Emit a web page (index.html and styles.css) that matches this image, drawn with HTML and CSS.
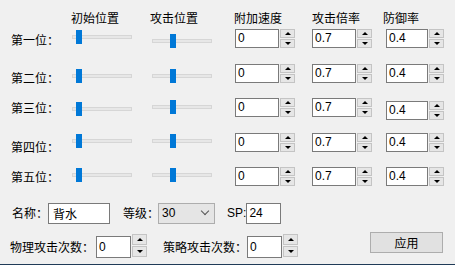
FILE: index.html
```html
<!DOCTYPE html>
<html lang="zh-CN">
<head>
    <meta charset="UTF-8">
    <title>阵型设置</title>
    <link rel="stylesheet" href="styles.css">
</head>
<body>

<div class="dialog">
    <div class="grid">
        <div class="head"></div>
        <div class="head h-start">初始位置</div>
        <div class="head h-attack">攻击位置</div>
        <div class="head h-speed">附加速度</div>
        <div class="head">攻击倍率</div>
        <div class="head h-def">防御率</div>

        <div class="row r1">
            <div class="name">第一位：</div>
            <div class="slider"><div class="track"></div><span class="thumb" style="left:4px"></span></div>
            <div class="slider s-b"><div class="track"></div><span class="thumb" style="left:18px"></span></div>
            <div class="spin"><div class="box">0</div><div class="arrows"><span class="up"></span><span class="down"></span></div></div>
            <div class="spin"><div class="box">0.7</div><div class="arrows"><span class="up"></span><span class="down"></span></div></div>
            <div class="spin"><div class="box">0.4</div><div class="arrows"><span class="up"></span><span class="down"></span></div></div>
        </div>

        <div class="row r2">
            <div class="name">第二位：</div>
            <div class="slider"><div class="track"></div><span class="thumb" style="left:4px"></span></div>
            <div class="slider s-b"><div class="track"></div><span class="thumb" style="left:18px"></span></div>
            <div class="spin"><div class="box">0</div><div class="arrows"><span class="up"></span><span class="down"></span></div></div>
            <div class="spin"><div class="box">0.7</div><div class="arrows"><span class="up"></span><span class="down"></span></div></div>
            <div class="spin"><div class="box">0.4</div><div class="arrows"><span class="up"></span><span class="down"></span></div></div>
        </div>

        <div class="row r3">
            <div class="name">第三位：</div>
            <div class="slider"><div class="track"></div><span class="thumb" style="left:4px"></span></div>
            <div class="slider s-b"><div class="track"></div><span class="thumb" style="left:18px"></span></div>
            <div class="spin"><div class="box">0</div><div class="arrows"><span class="up"></span><span class="down"></span></div></div>
            <div class="spin"><div class="box">0.7</div><div class="arrows"><span class="up"></span><span class="down"></span></div></div>
            <div class="spin s-low"><div class="box">0.4</div><div class="arrows"><span class="up"></span><span class="down"></span></div></div>
        </div>

        <div class="row r4">
            <div class="name">第四位：</div>
            <div class="slider"><div class="track"></div><span class="thumb" style="left:4px"></span></div>
            <div class="slider s-b"><div class="track"></div><span class="thumb" style="left:18px"></span></div>
            <div class="spin"><div class="box">0</div><div class="arrows"><span class="up"></span><span class="down"></span></div></div>
            <div class="spin"><div class="box">0.7</div><div class="arrows"><span class="up"></span><span class="down"></span></div></div>
            <div class="spin"><div class="box">0.4</div><div class="arrows"><span class="up"></span><span class="down"></span></div></div>
        </div>

        <div class="row r5">
            <div class="name">第五位：</div>
            <div class="slider"><div class="track"></div><span class="thumb" style="left:4px"></span></div>
            <div class="slider s-b"><div class="track"></div><span class="thumb" style="left:18px"></span></div>
            <div class="spin"><div class="box">0</div><div class="arrows"><span class="up"></span><span class="down"></span></div></div>
            <div class="spin"><div class="box">0.7</div><div class="arrows"><span class="up"></span><span class="down"></span></div></div>
            <div class="spin"><div class="box">0.4</div><div class="arrows"><span class="up"></span><span class="down"></span></div></div>
        </div>
    </div>

    <div class="info">
        <span class="lbl">名称：</span>
        <div class="box name-box">背水</div>
        <span class="lbl level">等级：</span>
        <div class="combo"><span>30</span><span class="chev"></span></div>
        <span class="lbl sp">SP:</span>
        <div class="box sp-box">24</div>
    </div>

    <div class="counts">
        <span class="lbl">物理攻击次数：</span>
        <div class="spin small"><div class="box">0</div><div class="arrows"><span class="up"></span><span class="down"></span></div></div>
        <span class="lbl tactic">策略攻击次数：</span>
        <div class="spin small"><div class="box">0</div><div class="arrows"><span class="up"></span><span class="down"></span></div></div>
        <button class="apply">应用</button>
    </div>
</div>

</body>
</html>
```

FILE: styles.css
```css
body {
    margin: 0;
    background-color: #f0f0f0;
    font-family: "Noto Sans CJK SC", "Liberation Sans", sans-serif;
    font-size: 12px;
    color: #000;
}
.dialog {
    width: 455px;
    height: 264px;
    border-bottom: 1px solid #1f3b57;
    overflow: hidden;
}
.grid {
    display: grid;
    grid-template-columns: 62px 80px 83px 77px 74px 58px;
    grid-template-rows: 19px repeat(5, 34.5px);
    padding: 10px 0 0 10px;
}
.row {
    display: contents;
}
.head {
    line-height: 14px;
    margin-top: 1px;
}
.h-start {
    margin-left: -1px;
}
.h-attack {
    margin-left: -2px;
}
.h-speed {
    margin-left: -1px;
}
.h-def {
    margin-left: -3px;
}
.name {
    line-height: 14px;
    margin-top: 4px;
    margin-left: 1px;
}
.r2 .name, .r4 .name {
    margin-top: 7px;
}
.r3 .name, .r5 .name {
    margin-top: 3px;
}

/* trackbars */
.slider {
    position: relative;
    width: 60px;
    height: 14px;
    margin-top: 1px;
    align-self: start;
}
.slider.s-b {
    margin-top: 5px;
}
.r2 .slider {
    margin-top: 5px;
}
.r3 .slider {
    margin-top: 4px;
}
.r3 .slider.s-b {
    margin-top: 2px;
}
.r4 .slider, .r5 .slider {
    margin-top: 1px;
}
.track {
    margin-top: 5px;
    height: 2px;
    background-color: #e7e7e7;
    border: 1px solid #d6d6d6;
}
.thumb {
    position: absolute;
    top: 0;
    width: 6px;
    height: 14px;
    background-color: #0078d7;
}

/* numeric up/down */
.spin {
    display: flex;
    align-items: flex-start;
    align-self: start;
}
.spin.s-low {
    margin-top: 3px;
}
.box {
    box-sizing: border-box;
    width: 44px;
    height: 19px;
    border: 1px solid #7a7a7a;
    background-color: #fff;
    padding-left: 2px;
    font-family: "Liberation Sans", "Noto Sans CJK SC", sans-serif;
    font-size: 12px;
    line-height: 17px;
}
.arrows {
    display: flex;
    flex-direction: column;
    gap: 1px;
    margin-left: 1px;
}
.arrows span {
    box-sizing: border-box;
    width: 15px;
    height: 9px;
    border: 1px solid #c4c4c4;
    background-color: #e6e6e6;
    display: flex;
    align-items: center;
    justify-content: center;
}
.arrows .up::before {
    content: "";
    border-left: 3px solid transparent;
    border-right: 3px solid transparent;
    border-bottom: 3px solid #000;
}
.arrows .down::before {
    content: "";
    border-left: 3px solid transparent;
    border-right: 3px solid transparent;
    border-top: 3px solid #000;
}

/* name / level row */
.info {
    display: flex;
    align-items: center;
    height: 21px;
    margin-top: 1px;
    padding-left: 12px;
}
.lbl {
    line-height: 14px;
}
.info .box {
    height: 21px;
    line-height: 19px;
}
.name-box {
    width: 62px;
    font-family: "Noto Sans CJK SC", sans-serif;
    padding-left: 4px;
}
.level {
    margin-left: 13px;
}
.combo {
    box-sizing: border-box;
    width: 57px;
    height: 21px;
    margin-left: -1px;
    border: 1px solid #adadad;
    background-color: #e5e5e5;
    display: flex;
    align-items: center;
    justify-content: space-between;
    padding: 0 6px 0 3px;
    font-family: "Liberation Sans", sans-serif;
}
.chev {
    width: 5px;
    height: 5px;
    border-right: 1px solid #555;
    border-bottom: 1px solid #555;
    transform: rotate(45deg);
    margin-top: -4px;
}
.sp {
    margin-left: 12px;
    font-family: "Liberation Sans", sans-serif;
}
.sp-box {
    width: 35px;
    margin-left: 0;
}

/* attack counts row */
.counts {
    display: flex;
    align-items: flex-start;
    margin-top: 8px;
    padding-left: 10px;
}
.counts .lbl {
    margin-top: 8px;
}
.spin.small {
    margin-top: 2px;
}
.spin.small .box {
    width: 35px;
    height: 22px;
    margin-top: 2px;
    line-height: 20px;
}
.spin.small .arrows span {
    height: 11px;
}
.counts .spin.small:first-of-type {
    margin-left: 2px;
}
.tactic {
    margin-left: 16px;
}
.apply {
    margin-left: auto;
    margin-right: 12px;
    width: 73px;
    height: 21px;
    border: 1px solid #adadad;
    background-color: #e1e1e1;
    font-family: "Noto Sans CJK SC", sans-serif;
    font-size: 12px;
    padding: 0;
    line-height: 19px;
}
```
